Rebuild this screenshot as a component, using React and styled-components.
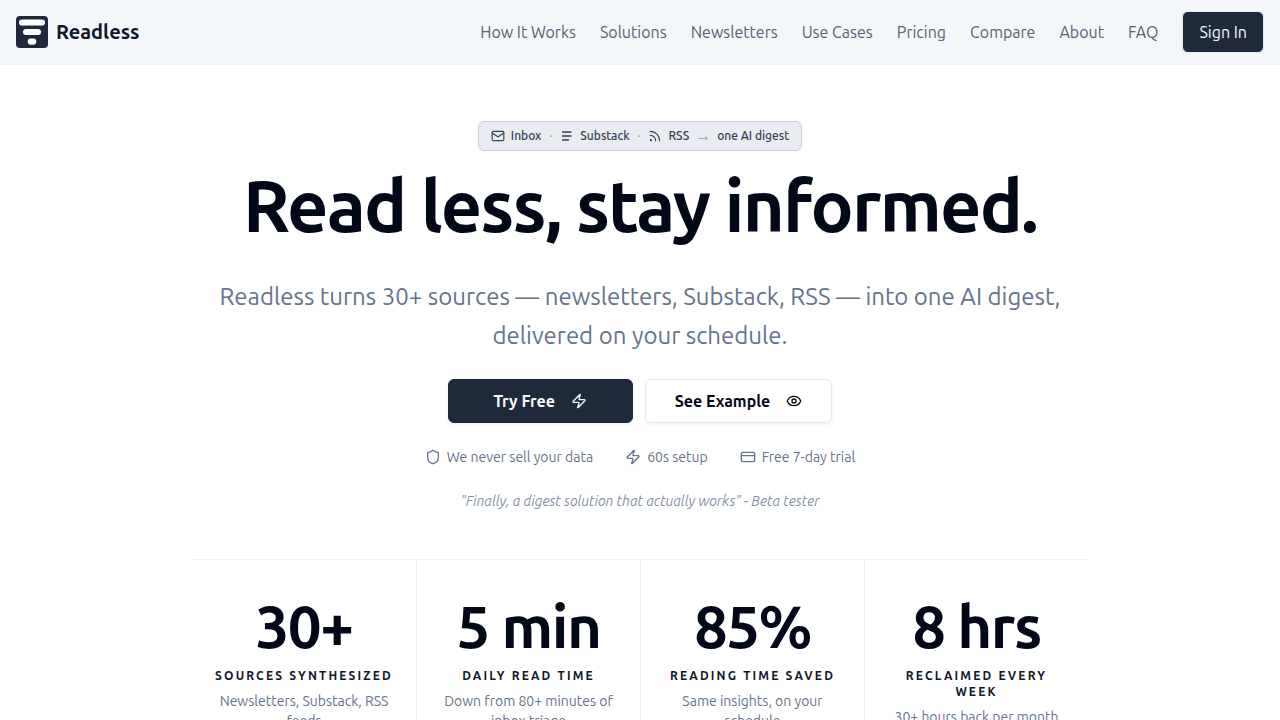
import React from "react";
import styled, { createGlobalStyle } from "styled-components";
import { Mail, Rss, Zap, Eye, Shield, CreditCard } from "lucide-react";

const GlobalStyle = createGlobalStyle`
  *, *::before, *::after { box-sizing: border-box; }
  body {
    margin: 0;
    background: #ffffff;
    color: #020817;
    font-family: Ubuntu, "Liberation Sans", sans-serif;
    font-size: 16px;
    line-height: 24px;
  }
  h1, p, dl, dt, dd, ul { margin: 0; padding: 0; }
  svg { flex: none; }
`;

const Header = styled.header`
  display: flex;
  align-items: center;
  justify-content: space-between;
  height: 65px;
  padding: 0 16px;
  background: #f3f7fa;
  border-bottom: 1px solid #f1f5f9;
`;

const Brand = styled.a`
  display: flex;
  align-items: center;
  gap: 8px;
  color: #0f172a;
  font-size: 20px;
  font-weight: 600;
  text-decoration: none;
`;

const Nav = styled.nav`
  display: flex;
  align-items: center;
  gap: 24px;
`;

const NavLink = styled.a`
  color: #5b6172;
  font-weight: 400;
  text-decoration: none;
`;

const SignIn = styled.button`
  height: 42px;
  padding: 0 16px;
  border: 1px solid #e2e8f0;
  border-radius: 6px;
  background: #1e293b;
  color: #f8fafc;
  font: inherit;
  font-weight: 400;
`;

const Hero = styled.main`
  display: flex;
  flex-direction: column;
  align-items: center;
  max-width: 928px;
  margin: 0 auto;
  padding: 56px 16px 48px;
  text-align: center;
`;

const SourceBadge = styled.div`
  display: flex;
  align-items: center;
  gap: 8px;
  height: 30px;
  padding: 0 12px;
  border: 1px solid #c7cedb;
  border-radius: 6px;
  background: #e9ecf1;
  color: #334155;
  font-size: 12px;
  font-weight: 500;
  line-height: 16px;
`;

const Source = styled.span`
  display: flex;
  align-items: center;
  gap: 6px;
`;

const Separator = styled.span`
  color: #94a3b8;
`;

const Arrow = styled(Separator)`
  display: flex;
  justify-content: center;
  width: 12px;
  font-family: "Liberation Sans", Arial, sans-serif;
  font-size: 16px;
`;

const Headline = styled.h1`
  margin-top: 16px;
  font-size: 72px;
  font-weight: 700;
  line-height: 78px;
  letter-spacing: -0.025em;
`;

const Lede = styled.p`
  max-width: 896px;
  margin-top: 32px;
  color: #64748b;
  font-size: 24px;
  font-weight: 400;
  line-height: 39px;
`;

const Actions = styled.div`
  display: flex;
  gap: 12px;
  margin-top: 24px;
`;

const Action = styled.button`
  display: flex;
  align-items: center;
  justify-content: center;
  gap: 16px;
  min-width: 185px;
  height: 44px;
  padding: 0 29px;
  border: 1px solid ${(p) => (p.$primary ? "#1e293b" : "#e2e8f0")};
  border-radius: 6px;
  background: ${(p) => (p.$primary ? "#1e293b" : "#ffffff")};
  color: ${(p) => (p.$primary ? "#f8fafc" : "#020817")};
  font: inherit;
  font-weight: 600;
  box-shadow: 0 2px 4px rgba(15, 23, 42, 0.06);
`;

const Assurances = styled.ul`
  display: flex;
  gap: 32px;
  margin-top: 24px;
  list-style: none;
  color: #64748b;
  font-size: 14px;
  font-weight: 400;
  line-height: 20px;
`;

const Assurance = styled.li`
  display: flex;
  align-items: center;
  gap: 6px;
`;

const Quote = styled.p`
  margin-top: 24px;
  color: #8492a6;
  font-size: 14px;
  font-weight: 400;
  font-style: italic;
  line-height: 20px;
`;

const Stats = styled.dl`
  display: grid;
  grid-template-columns: repeat(4, 1fr);
  width: 100%;
  margin-top: 48px;
  border-top: 1px solid #edf0f5;
`;

const Stat = styled.div`
  display: flex;
  flex-direction: column;
  padding: 36px 20px;
  border-left: 1px solid #edf0f5;

  &:first-child { border-left: 0; }
`;

const StatValue = styled.dd`
  font-size: 60px;
  font-weight: 700;
  line-height: 60px;
  letter-spacing: -0.025em;
`;

const StatLabel = styled.dt`
  order: 1;
  margin-top: 12px;
  color: #0f172a;
  font-size: 12px;
  font-weight: 600;
  line-height: 16px;
  letter-spacing: 0.18em;
  text-transform: uppercase;
`;

const StatNote = styled.dd`
  order: 2;
  margin-top: 7px;
  color: #64748b;
  font-size: 14px;
  font-weight: 400;
  line-height: 20px;
`;

const LogoMark = () => (
  <svg width="32" height="32" viewBox="0 0 32 32" aria-hidden="true">
    <rect width="32" height="32" rx="4" fill="#1e293b" />
    <rect x="3" y="3.4" width="26" height="6.2" rx="3.1" fill="#fff" />
    <rect x="7" y="13" width="18" height="6" rx="3" fill="#fff" />
    <rect x="11.7" y="22.5" width="8.6" height="6.2" rx="3.1" fill="#fff" />
  </svg>
);

const SubstackLines = () => (
  <svg width="14" height="14" viewBox="0 0 14 14" fill="none" stroke="currentColor" strokeWidth="1.6" aria-hidden="true">
    <path d="M2 3H11.5M2 7H11.5M2 11H9" />
  </svg>
);

const links = ["How It Works", "Solutions", "Newsletters", "Use Cases", "Pricing", "Compare", "About", "FAQ"];

const stats = [
  ["30+", "Sources synthesized", "Newsletters, Substack, RSS feeds"],
  ["5 min", "Daily read time", "Down from 80+ minutes of inbox triage"],
  ["85%", "Reading time saved", "Same insights, on your schedule"],
  ["8 hrs", "Reclaimed every week", "30+ hours back per month"],
];

export default function App() {
  return (
    <>
      <GlobalStyle />
      <Header>
        <Brand href="#"><LogoMark />Readless</Brand>
        <Nav>
          {links.map((label) => <NavLink key={label} href="#">{label}</NavLink>)}
          <SignIn type="button">Sign In</SignIn>
        </Nav>
      </Header>
      <Hero>
        <SourceBadge>
          <Source><Mail size={14} />Inbox</Source>
          <Separator>·</Separator>
          <Source><SubstackLines />Substack</Source>
          <Separator>·</Separator>
          <Source><Rss size={14} />RSS</Source>
          <Arrow>→</Arrow>
          <span>one AI digest</span>
        </SourceBadge>
        <Headline>Read less, stay informed.</Headline>
        <Lede>
          Readless turns 30+ sources — newsletters, Substack, RSS — into one AI digest, delivered on your schedule.
        </Lede>
        <Actions>
          <Action type="button" $primary>Try Free<Zap size={16} /></Action>
          <Action type="button">See Example<Eye size={16} /></Action>
        </Actions>
        <Assurances>
          <Assurance><Shield size={16} />We never sell your data</Assurance>
          <Assurance><Zap size={16} />60s setup</Assurance>
          <Assurance><CreditCard size={16} />Free 7-day trial</Assurance>
        </Assurances>
        <Quote>"Finally, a digest solution that actually works" - Beta tester</Quote>
        <Stats>
          {stats.map(([value, label, note]) => (
            <Stat key={label}>
              <StatLabel>{label}</StatLabel>
              <StatValue>{value}</StatValue>
              <StatNote>{note}</StatNote>
            </Stat>
          ))}
        </Stats>
      </Hero>
    </>
  );
}
